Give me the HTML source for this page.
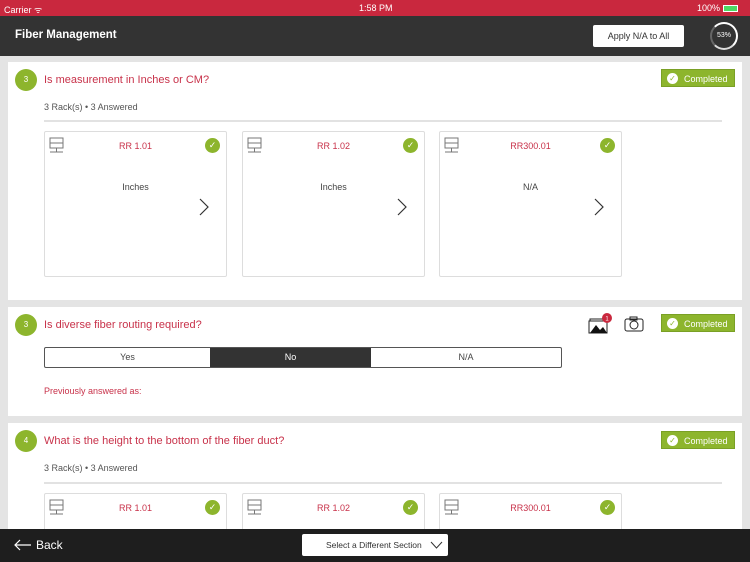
<!DOCTYPE html>
<html><head><style>
*{margin:0;padding:0;box-sizing:border-box}
html{width:750px;height:562px;overflow:hidden}
body{width:750px;height:562px;overflow:hidden;background:#e4e4e4;font-family:"Liberation Sans",sans-serif;position:relative}
.a{position:absolute}
.card{position:absolute;left:8px;width:734px;background:#fff;overflow:hidden}
.num{position:absolute;left:7px;width:22px;height:22px;border-radius:50%;background:#8db52d;color:#fff;font-size:8px;text-align:center;line-height:22px}
.q{position:absolute;left:36px;color:#c8324a;font-size:11px}
.comp{position:absolute;left:653px;width:74px;height:18px;background:#8db52d;color:#fff;font-size:9px;line-height:18px;padding-left:22px;border:1px solid #7aa025}
.comp:before{content:"✓";position:absolute;left:5px;top:3px;width:11px;height:11px;border-radius:50%;background:#fff;color:#8db52d;font-size:8px;line-height:11px;text-align:center}
.sub{position:absolute;left:36px;font-size:9px;color:#555}
.hr{position:absolute;left:36px;width:678px;height:2px;background:#e2e2e2}
.rk{position:absolute;width:183px;height:146px;border:1px solid #ddd;border-radius:2px;background:#fff}
.rk .t{position:absolute;left:0;right:0;top:9px;text-align:center;color:#c8324a;font-size:9px}
.rk .ck{position:absolute;right:6px;top:6px;width:15px;height:15px;border-radius:50%;background:#8db52d;color:#fff;font-size:9px;text-align:center;line-height:15px}
.rk .v{position:absolute;left:0;right:0;top:50px;text-align:center;font-size:9px;color:#444}
.rk svg.ic{position:absolute;left:4px;top:5px}
.rk .ar{position:absolute;right:17px;top:66px}
</style></head><body>
<div class="a" style="left:0;top:0;width:750px;height:16px;background:#c9283e;color:#fff;font-size:9px">
<span class="a" style="left:4px;top:3px">Carrier ᯤ</span>
<span class="a" style="left:359px;top:3px">1:58 PM</span>
<span class="a" style="left:697px;top:3px">100%</span>
<span class="a" style="left:723px;top:5px;width:15px;height:7px;background:#4cd964;border:1px solid #fff"></span>
</div>
<div class="a" style="left:0;top:16px;width:750px;height:40px;background:#333">
<span class="a" style="left:15px;top:13px;color:#fff;font-size:11.5px;font-weight:bold">Fiber Management</span>
<div class="a" style="left:593px;top:9px;width:91px;height:22px;background:#fff;border-radius:2px;font-size:9px;color:#333;text-align:center;line-height:22px">Apply N/A to All</div>
<div class="a" style="left:710px;top:6px;width:28px;height:28px;border-radius:50%;border:2px solid #fff;border-left-color:#666;border-bottom-color:#ddd;color:#fff;font-size:7px;text-align:center;line-height:24px">53%</div>
</div>

<div class="card" style="top:62px;height:238px">
<div class="num" style="top:7px">3</div>
<div class="q" style="top:12px">Is measurement in Inches or CM?</div>
<div class="comp" style="top:7px">Completed</div>
<div class="sub" style="top:40px">3 Rack(s) • 3 Answered</div>
<div class="hr" style="top:58px"></div>
<div class="rk" style="left:36px;top:69px"><svg class="ic" width="16" height="18"><rect x="1" y="1" width="13" height="5" fill="none" stroke="#777"/><rect x="1" y="6" width="13" height="5" fill="none" stroke="#777"/><path d="M7.5 11v4M1 15h13" stroke="#777"/></svg><div class="t">RR 1.01</div><div class="ck">✓</div><div class="v">Inches</div><svg class="ar" width="10" height="18"><path d="M1 1l8 8-8 8" fill="none" stroke="#333" stroke-width="1.2"/></svg></div>
<div class="rk" style="left:234px;top:69px"><svg class="ic" width="16" height="18"><rect x="1" y="1" width="13" height="5" fill="none" stroke="#777"/><rect x="1" y="6" width="13" height="5" fill="none" stroke="#777"/><path d="M7.5 11v4M1 15h13" stroke="#777"/></svg><div class="t">RR 1.02</div><div class="ck">✓</div><div class="v">Inches</div><svg class="ar" width="10" height="18"><path d="M1 1l8 8-8 8" fill="none" stroke="#333" stroke-width="1.2"/></svg></div>
<div class="rk" style="left:431px;top:69px"><svg class="ic" width="16" height="18"><rect x="1" y="1" width="13" height="5" fill="none" stroke="#777"/><rect x="1" y="6" width="13" height="5" fill="none" stroke="#777"/><path d="M7.5 11v4M1 15h13" stroke="#777"/></svg><div class="t">RR300.01</div><div class="ck">✓</div><div class="v">N/A</div><svg class="ar" width="10" height="18"><path d="M1 1l8 8-8 8" fill="none" stroke="#333" stroke-width="1.2"/></svg></div>
</div>

<div class="card" style="top:307px;height:109px">
<div class="num" style="top:7px">3</div>
<div class="q" style="top:12px">Is diverse fiber routing required?</div>
<svg class="a" style="left:580px;top:6px" width="24" height="22"><rect x="2" y="6" width="16" height="14" fill="#fff" stroke="#222"/><rect x="1" y="8" width="18" height="12" fill="#fff" stroke="#222"/><path d="M2 20l6-8 4 5 3-3 4 6z" fill="#111"/><circle cx="19" cy="5" r="5" fill="#c9283e"/><text x="19" y="7.5" font-size="6" fill="#fff" text-anchor="middle" font-family="Liberation Sans">1</text></svg>
<svg class="a" style="left:616px;top:9px" width="20" height="16"><rect x="1" y="3" width="18" height="12" rx="2" fill="none" stroke="#222"/><rect x="6" y="1" width="7" height="3" fill="none" stroke="#222"/><circle cx="10" cy="9" r="4" fill="none" stroke="#222"/></svg>
<div class="comp" style="top:7px">Completed</div>
<div class="a" style="left:36px;top:40px;width:518px;height:21px;border:1px solid #555;border-radius:2px;display:flex;font-size:9px;overflow:hidden">
<div style="width:165px;text-align:center;line-height:19px;color:#444">Yes</div>
<div style="width:161px;text-align:center;line-height:19px;background:#333;color:#fff">No</div>
<div style="flex:1;text-align:center;line-height:19px;color:#444">N/A</div>
</div>
<div class="q" style="top:79px;font-size:9px">Previously answered as:</div>
</div>

<div class="card" style="top:423px;height:106px">
<div class="num" style="top:7px">4</div>
<div class="q" style="top:12px">What is the height to the bottom of the fiber duct?</div>
<div class="comp" style="top:8px">Completed</div>
<div class="sub" style="top:40px">3 Rack(s) • 3 Answered</div>
<div class="hr" style="top:59px"></div>
<div class="rk" style="left:36px;top:70px"><svg class="ic" width="16" height="18"><rect x="1" y="1" width="13" height="5" fill="none" stroke="#777"/><rect x="1" y="6" width="13" height="5" fill="none" stroke="#777"/><path d="M7.5 11v4M1 15h13" stroke="#777"/></svg><div class="t">RR 1.01</div><div class="ck">✓</div></div>
<div class="rk" style="left:234px;top:70px"><svg class="ic" width="16" height="18"><rect x="1" y="1" width="13" height="5" fill="none" stroke="#777"/><rect x="1" y="6" width="13" height="5" fill="none" stroke="#777"/><path d="M7.5 11v4M1 15h13" stroke="#777"/></svg><div class="t">RR 1.02</div><div class="ck">✓</div></div>
<div class="rk" style="left:431px;top:70px"><svg class="ic" width="16" height="18"><rect x="1" y="1" width="13" height="5" fill="none" stroke="#777"/><rect x="1" y="6" width="13" height="5" fill="none" stroke="#777"/><path d="M7.5 11v4M1 15h13" stroke="#777"/></svg><div class="t">RR300.01</div><div class="ck">✓</div></div>
</div>

<div class="a" style="left:0;top:529px;width:750px;height:33px;background:#1e1e1e">
<svg class="a" style="left:14px;top:10px" width="18" height="12"><path d="M17 6H1M6 1L1 6l5 5" fill="none" stroke="#fff" stroke-width="1.2"/></svg>
<span class="a" style="left:36px;top:9px;color:#fff;font-size:12px">Back</span>
<div class="a" style="left:302px;top:5px;width:146px;height:22px;background:#fff;border-radius:2px;font-size:8.5px;color:#333;line-height:22px;padding-left:24px">Select a Different Section
<svg class="a" style="left:128px;top:7px" width="13" height="8"><path d="M1 1l5.5 6L12 1" fill="none" stroke="#333"/></svg></div>
</div>
</body></html>
